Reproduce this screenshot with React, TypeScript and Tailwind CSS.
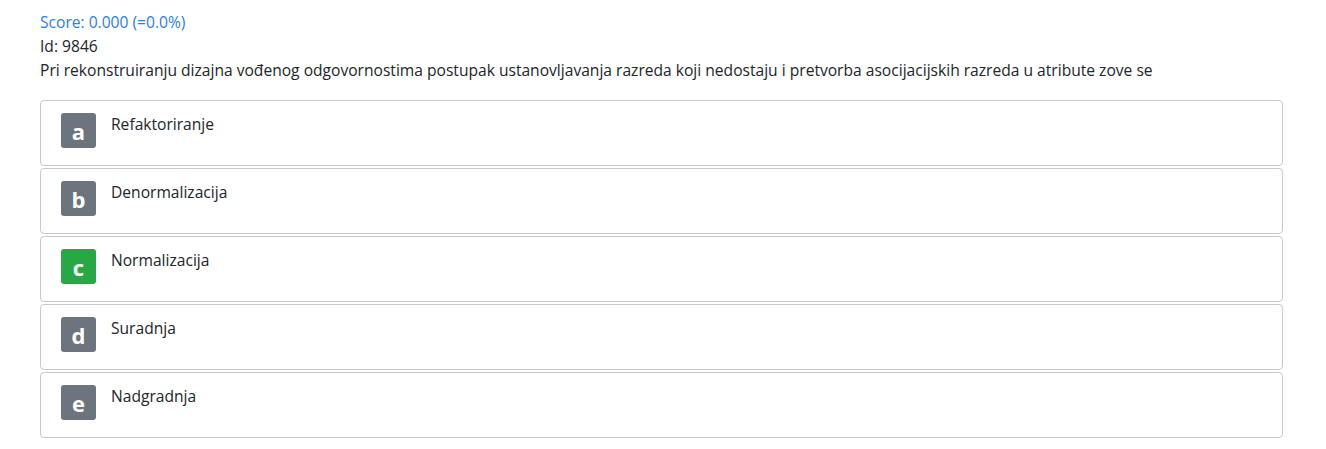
const options = [
  { letter: 'a', text: 'Refaktoriranje', correct: false },
  { letter: 'b', text: 'Denormalizacija', correct: false },
  { letter: 'c', text: 'Normalizacija', correct: true },
  { letter: 'd', text: 'Suradnja', correct: false },
  { letter: 'e', text: 'Nadgradnja', correct: false },
];

export default function App() {
  return (
    <div className="min-h-screen bg-white px-10 pt-[10px] text-[15.6px] leading-6 text-[#212529] [font-family:'Open_Sans','Noto_Sans',sans-serif]">
      {/* Header */}
      <div className="text-[#2b7de9]">Score: 0.000 (=0.0%)</div>
      <div>Id: 9846</div>
      <div>
        Pri rekonstruiranju dizajna vođenog odgovornostima postupak ustanovljavanja razreda koji nedostaju i pretvorba asocijacijskih razreda u atribute zove se
      </div>

      {/* Answers */}
      <div className="mt-[18px] flex w-[1243px] flex-col gap-[2px]">
        {options.map((o) => (
          <div
            key={o.letter}
            className="flex h-[66px] items-start gap-[15px] rounded border border-[#c9c9c9] px-5 pt-3"
          >
            <div
              className={`flex h-[35px] w-[35px] shrink-0 items-center justify-center rounded-[3px] pt-[1px] text-[22px] font-bold text-white ${
                o.correct ? 'bg-[#28a745]' : 'bg-[#6c757d]'
              }`}
            >
              {o.letter}
            </div>
            <div className="-mt-[1px]">{o.text}</div>
          </div>
        ))}
      </div>
    </div>
  );
}
